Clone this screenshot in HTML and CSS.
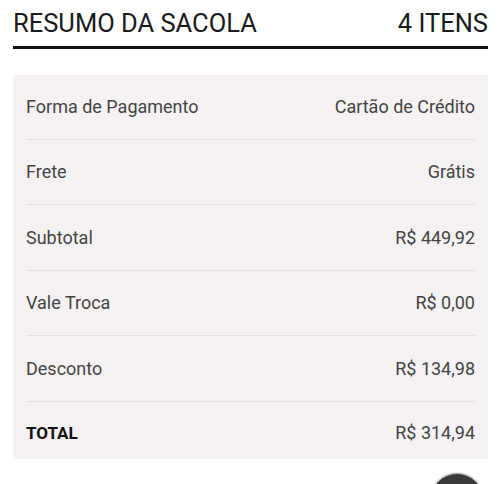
FILE: index.html
```html
<html>

<head>
    <meta name="viewport" content="width=device-width, initial-scale=1">
    <title>Resumo da sacola</title>
    <link rel="stylesheet" href="styles.css">
</head>

<body>
    <div id="summary">
        <div class="header">
            <h1>RESUMO DA SACOLA</h1>
            <span class="count">4 ITENS</span>
        </div>
        <div class="panel">
            <div class="row"><span>Forma de Pagamento</span><span>Cartão de Crédito</span></div>
            <div class="row"><span>Frete</span><span>Grátis</span></div>
            <div class="row"><span>Subtotal</span><span>R$ 449,92</span></div>
            <div class="row"><span>Vale Troca</span><span>R$ 0,00</span></div>
            <div class="row"><span>Desconto</span><span>R$ 134,98</span></div>
            <div class="row total"><span>TOTAL</span><span>R$ 314,94</span></div>
        </div>
    </div>
    <div class="fab"></div>
</body>

</html>
```

FILE: styles.css
```css
body {
    background-color: white;
    font-family: Roboto, "Liberation Sans", sans-serif;
    margin: 0;
    overflow: hidden;
}

#summary {
    padding: 0 12px 0 13px;
}

.header {
    display: flex;
    justify-content: space-between;
    align-items: center;
    height: 46px;
    border-bottom: 3px solid #111;
    font-size: 25.5px;
    color: #1a1a1a;
}

.header h1 {
    font-size: 25.5px;
    font-weight: normal;
    margin: 0;
}

.panel {
    margin-top: 26px;
    background-color: #f6f2f3;
    padding: 0 13px;
}

.row {
    display: flex;
    justify-content: space-between;
    align-items: center;
    height: 64.5px;
    border-bottom: 1px solid #e5e1e2;
    font-size: 18px;
    color: #444;
}

.row:first-child {
    height: 63.5px;
}

.row.total {
    box-sizing: border-box;
    height: 57.5px;
    padding-top: 5px;
    border-bottom: none;
}

.row.total span:first-child {
    font-size: 17px;
    font-weight: bold;
    color: #111;
}

.fab {
    position: absolute;
    left: 430px;
    top: 473px;
    width: 52px;
    height: 52px;
    border-radius: 50%;
    background: #3a3a3a;
    border: 1px solid #bbb;
    box-shadow: 0 0 2px rgba(0, 0, 0, 0.3);
}
```
